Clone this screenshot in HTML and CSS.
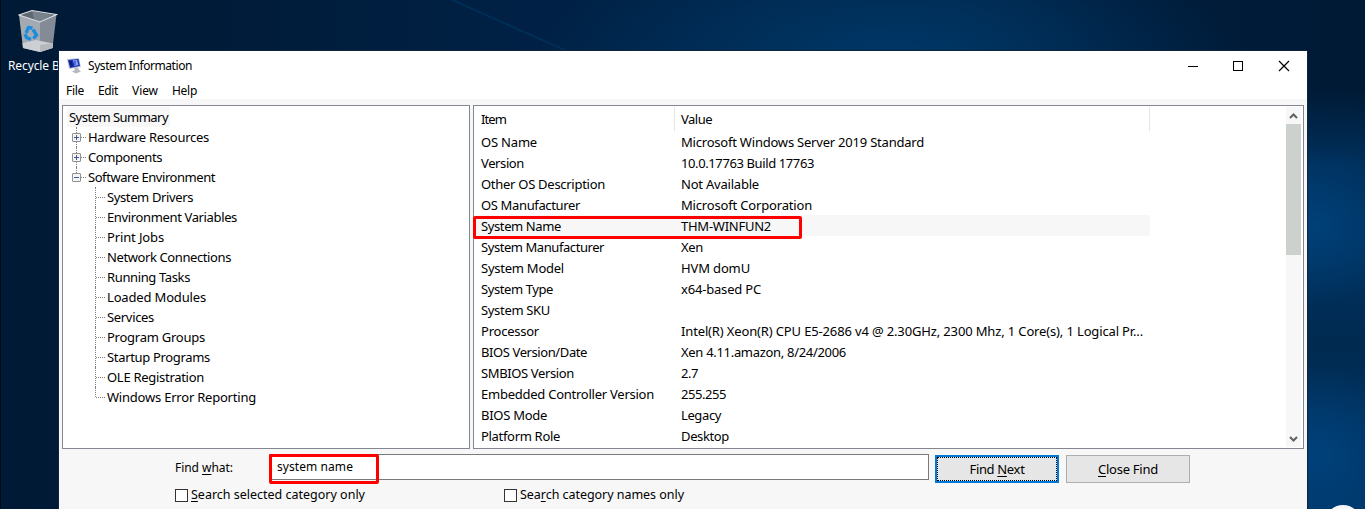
FILE: index.html
```html
<!DOCTYPE html>
<html lang="en">
<head>
<meta charset="utf-8">
<title>System Information</title>
<link rel="stylesheet" href="styles.css">
</head>
<body>
<div class="desktop">
  <div class="recycle">
    <svg width="40" height="44" viewBox="0 0 40 44">
      <path d="M1 6L22 13L22 43L5 39Z" fill="#a4aab1"/>
      <path d="M22 13L38.500 5.500L34.500 39L22 43Z" fill="#828b96"/>
      <path d="M1 6L14 1.500L38.500 5.500L22 13Z" fill="#5d6873"/>
      <path d="M14 2L16 10L22 13L34 6Z" fill="#78828c"/>
      <path d="M4.500 34L18 31L35 34.500L34.500 39L22 43L5 39Z" fill="#ccd0d4"/>
      <path d="M22 36L35 34L34.500 39L22 43Z" fill="#b4b8bd"/>
      <path d="M1 6L14 1.500L38.500 5.500L22 13Z" fill="none" stroke="#e0e3e5" stroke-width="1.100"/>
      <g fill="none" stroke="#1b8de0" stroke-width="3.400"><path d="M8 24L10.500 18.500L14.500 19"/><path d="M15 20.500L18.500 26L15.500 29.500"/><path d="M13 30.500L8.500 28.500L7 25"/></g>
    </svg>
    <span class="recycle-label" data-w="62">Recycle Bin</span>
  </div>
  <div class="orb"></div>
  <main class="window">
    <header class="titlebar">
      <svg class="app-icon" width="16" height="16" viewBox="0 0 16 16">
        <path d="M0 1L12 0L14 9L2 11Z" fill="#c3cad8"/><path d="M1 2L11.500 1L13 8L3 10Z" fill="#1c30b0"/>
        <path d="M6 2L10 2L11.500 7L7.500 8Z" fill="#7fa6f2"/><path d="M2 3L4.500 3L6 8L4 9Z" fill="#0b1b86"/><path d="M8 2.500V7" stroke="#1c30b0"/>
        <path d="M7 10L11 9.500L12 12L14 13.500L9 15.500L5 13.500L8 12Z" fill="#b4b9c1"/>
      </svg>
      <span class="title" data-w="104">System Information</span>
      <svg class="controls" width="104" height="12" viewBox="0 0 104 12" fill="none" stroke="#000" shape-rendering="crispEdges">
        <path d="M0 6.500H10"/><rect x="45.500" y="1.500" width="9" height="9"/><path d="M91 1L101 11M101 1L91 11" shape-rendering="auto" stroke-width="1.200"/>
      </svg>
    </header>
    <nav class="menu"><span data-w="18">File</span><span data-w="20">Edit</span><span data-w="26">View</span><span data-w="25">Help</span></nav>
    <div class="panes">
      <section class="tree">
        <div class="row root"><span><b data-w="99">System Summary</b></span></div>
        <div class="row top"><i class="box plus"></i><span data-w="121">Hardware Resources</span></div>
        <div class="row top"><i class="box plus"></i><span data-w="74">Components</span></div>
        <div class="row top last"><i class="box"></i><span data-w="127">Software Environment</span></div>
        <div class="row sub"><span data-w="86">System Drivers</span></div>
        <div class="row sub"><span data-w="130">Environment Variables</span></div>
        <div class="row sub"><span data-w="57">Print Jobs</span></div>
        <div class="row sub"><span data-w="124">Network Connections</span></div>
        <div class="row sub"><span data-w="83">Running Tasks</span></div>
        <div class="row sub"><span data-w="99">Loaded Modules</span></div>
        <div class="row sub"><span data-w="47">Services</span></div>
        <div class="row sub"><span data-w="98">Program Groups</span></div>
        <div class="row sub"><span data-w="103">Startup Programs</span></div>
        <div class="row sub"><span data-w="97">OLE Registration</span></div>
        <div class="row sub last"><span data-w="149">Windows Error Reporting</span></div>
      </section>
      <section class="details">
        <div class="table">
          <div class="head"><span><b data-w="25">Item</b></span><span><b data-w="31">Value</b></span></div>
          <div class="item"><span><b data-w="56">OS Name</b></span><span><b data-w="243">Microsoft Windows Server 2019 Standard</b></span></div>
          <div class="item"><span><b data-w="43">Version</b></span><span><b data-w="133">10.0.17763 Build 17763</b></span></div>
          <div class="item"><span><b data-w="124">Other OS Description</b></span><span><b data-w="78">Not Available</b></span></div>
          <div class="item"><span><b data-w="99">OS Manufacturer</b></span><span><b data-w="131">Microsoft Corporation</b></span></div>
          <div class="item selected"><span><b data-w="80">System Name</b></span><span><b data-w="90">THM-WINFUN2</b></span><i class="mark mark-row"></i></div>
          <div class="item"><span><b data-w="123">System Manufacturer</b></span><span><b data-w="22">Xen</b></span></div>
          <div class="item"><span><b data-w="83">System Model</b></span><span><b data-w="69">HVM domU</b></span></div>
          <div class="item"><span><b data-w="72">System Type</b></span><span><b data-w="80">x64-based PC</b></span></div>
          <div class="item"><span><b data-w="69">System SKU</b></span><span></span></div>
          <div class="item"><span><b data-w="58">Processor</b></span><span><b data-w="462">Intel(R) Xeon(R) CPU E5-2686 v4 @ 2.30GHz, 2300 Mhz, 1 Core(s), 1 Logical Pr...</b></span></div>
          <div class="item"><span><b data-w="106">BIOS Version/Date</b></span><span><b data-w="165">Xen 4.11.amazon, 8/24/2006</b></span></div>
          <div class="item"><span><b data-w="93">SMBIOS Version</b></span><span><b data-w="17">2.7</b></span></div>
          <div class="item"><span><b data-w="173">Embedded Controller Version</b></span><span><b data-w="45">255.255</b></span></div>
          <div class="item"><span><b data-w="66">BIOS Mode</b></span><span><b data-w="40">Legacy</b></span></div>
          <div class="item"><span><b data-w="79">Platform Role</b></span><span><b data-w="48">Desktop</b></span></div>
        </div>
        <div class="scrollbar">
          <svg width="15" height="17" viewBox="0 0 15 17"><path d="M4 11L7.500 7.500L11 11" fill="none" stroke="#606060" stroke-width="2"/></svg>
          <div class="thumb"></div>
          <svg width="15" height="17" viewBox="0 0 15 17"><path d="M4 7L7.500 10.500L11 7" fill="none" stroke="#606060" stroke-width="2"/></svg>
        </div>
      </section>
    </div>
    <footer class="find">
      <div class="find-row">
        <label class="find-label"><b data-w="58">Find <u>w</u>hat:</b></label>
        <div class="field"><b data-w="76">system name</b><i class="mark mark-field"></i></div>
        <div class="button primary"><span data-w="55">Find <u>N</u>ext</span></div>
        <div class="button"><span data-w="60"><u>C</u>lose Find</span></div>
      </div>
      <div class="checks">
        <div class="check"><i></i><span data-w="174"><u>S</u>earch selected category only</span></div>
        <div class="check"><i></i><span data-w="164">Sea<u>r</u>ch category names only</span></div>
      </div>
    </footer>
  </main>
</div>
<script src="labels.js"></script>
</body>
</html>
```
FILE: labels.js
```js
// Spread each label's letters so that it takes the width given in data-w.
document.querySelectorAll("[data-w]").forEach(function (label) {
  var extra = Number(label.dataset.w) - label.getBoundingClientRect().width;
  label.style.letterSpacing = extra / label.textContent.length + "px";
});
```
FILE: styles.css
```css
* { box-sizing: border-box; }
body { margin: 0; overflow: hidden; font: 13px/20px "Noto Sans", sans-serif; color: #000; }
i { font-style: normal; }
b { font-weight: normal; }
[data-w] { white-space: nowrap; }
.desktop {
  position: relative; width: 1365px; height: 509px; overflow: hidden; padding: 51px 0 0 59px;
  background:
    linear-gradient(90deg, #000b18 1px, transparent 1px),
    linear-gradient(24deg, transparent 49.600%, rgba(0, 66, 116, .5) 50%, transparent 51%) 400px -20px / 260px 110px no-repeat,
    linear-gradient(90deg, transparent 1306px, rgba(0, 27, 56, 0) 1306px),
    radial-gradient(ellipse 90px 80px at 1315px 225px, #004078 0, transparent 100%),
    radial-gradient(ellipse 90px 90px at 1320px 455px, #00417a 0, transparent 100%),
    linear-gradient(transparent 90px, #00305c 165px, #003260 250px, #002a50 345px, #003260 430px, #00376a) 1306px 0 / 59px 509px no-repeat,
    radial-gradient(ellipse 350px 130px at 890px 60px, #003868 0, transparent 100%),
    linear-gradient(90deg, #001a36, #001b38 15%, #002145 38%, #002448 70%, #001d3c 82%, #001a35);
}
.recycle { position: absolute; left: 8px; top: 9px; display: flex; flex-direction: column; align-items: flex-start; padding-left: 10px; color: #fff; }
.recycle-label { margin: 3px 0 0 -10px; font-size: 12px; }
.orb { position: absolute; left: 1325px; top: 505px; width: 36px; height: 36px; border-radius: 50%; background: #f4f6fa; }
.window { position: relative; width: 1248px; height: 470px; background: #f7f7f7; box-shadow: 0 0 0 1px #10243c; }
.titlebar { display: flex; align-items: center; height: 29px; padding-left: 8px; background: #fff; font-size: 12px; }
.title { margin-left: 5px; }
.controls { margin-left: auto; margin-right: 15px; }
.menu { display: flex; height: 19px; padding: 1px 0 0 7px; gap: 14px; background: #fff; font-size: 12px; }
.panes { display: flex; gap: 3px; height: 350px; padding: 6px 3px 0; }
.tree, .details { height: 344px; border: 1px solid #828790; background: #fff; }
.tree { width: 408px; padding: 1px 4px; }
.row { position: relative; height: 20px; white-space: nowrap; }
.root span { display: inline-block; height: 20px; padding: 0 2px; background: #f7f7f7; }
.top { padding-left: 21px; }
.top::before { content: ""; position: absolute; left: 9px; top: 0; height: 20px; border-left: 1px dotted #808080; }
.top.last::before { height: 10px; }
.top::after { content: ""; position: absolute; left: 14px; top: 10px; width: 5px; border-top: 1px dotted #808080; }
.box { position: absolute; z-index: 1; left: 5px; top: 6px; width: 9px; height: 9px; border: 1px solid #919191; border-radius: 1px; background: linear-gradient(90deg, #3c58a0, #3c58a0) center / 5px 1px no-repeat, #f5f5f5; }
.box.plus { background: linear-gradient(#3c58a0, #3c58a0) center / 5px 1px no-repeat, linear-gradient(#3c58a0, #3c58a0) center / 1px 5px no-repeat, #f5f5f5; }
.sub { padding-left: 40px; }
.sub::before { content: ""; position: absolute; left: 28px; top: 0; height: 20px; border-left: 1px dotted #808080; }
.sub.last::before { height: 10px; }
.sub::after { content: ""; position: absolute; left: 29px; top: 10px; width: 9px; border-top: 1px dotted #808080; }
.details { display: flex; width: 831px; padding: 1px 2px 1px 1px; }
.table { width: 675px; }
.head, .item { position: relative; display: grid; grid-template-columns: 200px 475px; white-space: nowrap; }
.head { height: 24px; line-height: 24px; }
.head span { border-right: 1px solid #e5e5e5; }
.item { height: 21px; line-height: 22px; }
.head span, .item span { padding-left: 6px; }
.selected { background: #f7f7f7; }
.mark { position: absolute; border: 3px solid #f00; border-radius: 2px; }
.mark-row { left: -2px; top: 1px; width: 329px; height: 23px; }
.scrollbar { display: flex; flex-direction: column; width: 15px; margin-left: auto; background: #f7f7f7; }
.scrollbar svg:last-child { margin-top: auto; }
.thumb { height: 131px; background: #cdd1ce; }
.find-row { display: flex; padding: 6px 0 0 116px; }
.find-label { width: 94px; padding-top: 3px; font-size: 12px; }
.field { position: relative; width: 660px; height: 26px; margin-top: -1px; padding-left: 7px; border: 1px solid #7a7a7a; background: #fff; line-height: 24px; font-size: 12px; }
.mark-field { left: -1px; top: -1px; width: 110px; height: 30px; }
.button { display: flex; align-items: center; justify-content: center; width: 124px; height: 28px; margin-left: 7px; border: 1px solid #adadad; background: #e6e6e6; }
.primary { border: 2px solid #0078d7; outline: 1px dotted #000; outline-offset: -3px; margin-left: 6px; }
.checks { display: flex; padding: 2px 0 0 116px; font-size: 12.5px; }
.check { display: flex; align-items: center; gap: 3px; width: 329px; }
.check i { width: 13px; height: 13px; border: 1px solid #333; background: #fff; }
u { text-underline-offset: 2px; }
```
